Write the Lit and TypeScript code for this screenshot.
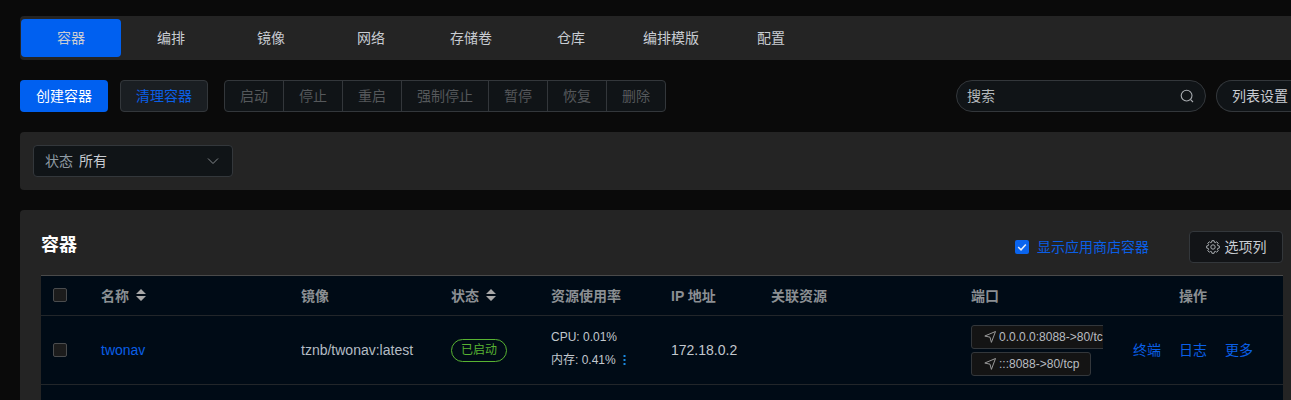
import {LitElement, html, css, svg} from 'lit';
import {customElement} from 'lit/decorators.js';

const tabs = ['容器', '编排', '镜像', '网络', '存储卷', '仓库', '编排模版', '配置'];
const actions = ['启动', '停止', '重启', '强制停止', '暂停', '恢复', '删除'];
const ports = ['0.0.0.0:8088->80/tcp', ':::8088->80/tcp'];
const ops = ['终端', '日志', '更多'];

const sortIcon = svg`<svg class="sort" width="10" height="12" viewBox="0 0 10 12"><path d="M5 0 L10 5 H0 Z M5 12 L0 7 H10 Z" fill="currentColor"/></svg>`;
const portIcon = svg`<svg width="14" height="14" viewBox="0 0 14 14" fill="none" stroke="#9a9a9a" stroke-width="1"><path d="M12.5 1.5 L1.8 6 L7 7.2 L8.4 12.4 Z"/></svg>`;

// gear outline, 8 teeth around the middle of a 14px box
function gearPath() {
  const pts: string[] = [];
  for (let i = 0; i < 8; i++) {
    const a = (i * Math.PI) / 4;
    for (const [r, d] of [[4.9, -0.3], [6.4, -0.17], [6.4, 0.17], [4.9, 0.3]]) {
      const x = 7 + r * Math.cos(a + d);
      const y = 7 + r * Math.sin(a + d);
      pts.push(`${x.toFixed(2)} ${y.toFixed(2)}`);
    }
  }
  return 'M' + pts.join(' L') + ' Z';
}

@customElement('app-root')
export class AppRoot extends LitElement {
  static styles = css`
    :host {
      display: block;
      height: 400px;
      overflow: hidden;
      background: #0a0a0a;
      font-family: "Liberation Sans", "Noto Sans CJK SC", sans-serif;
      font-size: 14px;
      color: #c8ccd2;
    }
    .page {
      width: 1284px;
      margin-left: 20px;
      padding-top: 16px;
    }

    /* tabs */
    .tabs {
      display: flex;
      height: 44px;
      box-sizing: border-box;
      padding: 3px 1px;
      background: #242424;
      border-radius: 4px;
    }
    .tab {
      width: 100px;
      display: flex;
      align-items: center;
      justify-content: center;
      box-sizing: border-box;
      padding-bottom: 2px;
      border-radius: 4px;
      color: #c8ccd2;
    }
    .tab.active {
      background: #0060f0;
    }

    /* toolbar */
    .toolbar {
      display: flex;
      align-items: center;
      margin-top: 20px;
      height: 32px;
    }
    .btn {
      height: 32px;
      box-sizing: border-box;
      padding: 0 15px 2px;
      border-radius: 4px;
      display: flex;
      align-items: center;
      border: 1px solid transparent;
    }
    .btn.primary {
      background: #0060f0;
      color: #fff;
      margin-right: 12px;
    }
    .btn.plain {
      background: #1a1e22;
      border-color: #33373b;
      color: #0a5fe6;
      margin-right: 16px;
    }
    .group {
      display: flex;
      height: 32px;
      box-sizing: border-box;
      border: 1px solid #33373b;
      border-radius: 4px;
      background: #101417;
    }
    .group span {
      padding: 0 15px 2px;
      display: flex;
      align-items: center;
      color: #55585b;
      border-right: 1px solid #33373b;
    }
    .group span:last-child {
      border-right: 0;
    }
    .search {
      margin-left: auto;
      width: 250px;
      height: 32px;
      box-sizing: border-box;
      border: 1px solid #33373b;
      border-radius: 16px;
      background: #101417;
      display: flex;
      align-items: center;
      justify-content: space-between;
      padding: 0 11px 0 10px;
      color: #b4b8bc;
    }
    .search span {
      padding-bottom: 2px;
    }
    .settings {
      margin-left: 10px;
      height: 32px;
      width: 88px;
      box-sizing: border-box;
      padding: 0 15px 2px;
      border: 1px solid #33373b;
      border-right: 0;
      border-radius: 16px 0 0 16px;
      background: #101417;
      display: flex;
      align-items: center;
      color: #c8ccd2;
    }

    /* filter */
    .filter {
      margin-top: 20px;
      height: 58px;
      box-sizing: border-box;
      padding: 13px;
      background: #242424;
      border-radius: 4px;
    }
    .select {
      width: 200px;
      height: 32px;
      box-sizing: border-box;
      border: 1px solid #33373b;
      border-radius: 4px;
      background: #101417;
      display: flex;
      align-items: center;
      padding: 0 13px 0 11px;
    }
    .select span {
      padding-bottom: 2px;
    }
    .select .key {
      color: #8f9aa3;
      margin-right: 6px;
    }
    .select .chev {
      margin-left: auto;
    }

    /* container card */
    .card {
      margin-top: 20px;
      padding: 21px 21px 0;
      background: #242424;
      border-radius: 4px;
      height: 300px;
      box-sizing: border-box;
    }
    .head {
      display: flex;
      align-items: center;
      height: 32px;
      margin-bottom: 12px;
    }
    .title {
      font-size: 18px;
      font-weight: bold;
      color: #fff;
      padding-bottom: 8px;
    }
    .check-app {
      margin-left: auto;
      display: flex;
      align-items: center;
      color: #0a5fe6;
      margin-right: 40px;
    }
    .check-app span.text {
      padding-bottom: 2px;
    }
    .check-on {
      width: 14px;
      height: 14px;
      background: #0a64ee;
      border-radius: 2px;
      margin-right: 8px;
      display: flex;
      align-items: center;
      justify-content: center;
    }
    .columns {
      width: 94px;
      height: 32px;
      box-sizing: border-box;
      border: 1px solid #33373b;
      border-radius: 4px;
      background: #121417;
      display: flex;
      align-items: center;
      justify-content: center;
      gap: 5px;
      color: #c8ccd2;
    }
    .columns span {
      padding-bottom: 2px;
    }

    /* table */
    .table {
      background: #000b16;
      border-top: 1px solid #4a4a4a;
      height: 200px;
    }
    .row {
      display: grid;
      grid-template-columns: 60px 200px 150px 100px 120px 100px 200px 132px 180px;
      align-items: center;
      box-sizing: border-box;
      border-bottom: 1px solid #22262a;
    }
    .row.header {
      height: 40px;
      font-weight: bold;
      color: #8b8f93;
    }
    .row.header > div {
      padding-bottom: 2px;
    }
    .row.body {
      height: 69px;
    }
    .box {
      width: 14px;
      height: 14px;
      box-sizing: border-box;
      margin-left: 12px;
      border: 1px solid #4a4c4e;
      border-radius: 2px;
      background: #1c1c1c;
    }
    .label {
      display: flex;
      align-items: center;
      gap: 7px;
    }
    .sort {
      color: #a8a8a8;
    }
    .center {
      text-align: center;
    }
    .name {
      color: #0a5fe6;
    }
    .image {
      color: #b4bcc4;
    }
    .status {
      display: block;
      width: 56px;
      height: 23px;
      line-height: 20px;
      box-sizing: border-box;
      border: 1px solid #58b332;
      border-radius: 12px;
      color: #58b332;
      font-size: 12px;
      text-align: center;
    }
    .usage {
      font-size: 12px;
      color: #c2c8ce;
      line-height: 23px;
      padding-bottom: 2px;
    }
    .usage .dots {
      vertical-align: -2px;
      margin-left: 7px;
    }
    .ip {
      color: #c2c8ce;
    }
    .ports {
      overflow: hidden;
      display: flex;
      flex-direction: column;
      gap: 3px;
    }
    .port {
      display: inline-flex;
      align-items: center;
      align-self: flex-start;
      gap: 2px;
      height: 24px;
      box-sizing: border-box;
      padding: 0 11px;
      border: 1px solid #33373b;
      border-radius: 3px;
      background: #141414;
      color: #b8bcc0;
      font-size: 12px;
      white-space: nowrap;
    }
    .ops {
      display: flex;
      justify-content: center;
      gap: 18px;
      color: #0a5fe6;
      padding-bottom: 2px;
    }
  `;

  render() {
    return html`
      <div class="page">
        <div class="tabs">
          ${tabs.map((t, i) => html`<div class="tab ${i === 0 ? 'active' : ''}">${t}</div>`)}
        </div>

        <div class="toolbar">
          <div class="btn primary">创建容器</div>
          <div class="btn plain">清理容器</div>
          <div class="group">${actions.map((a) => html`<span>${a}</span>`)}</div>
          <div class="search">
            <span>搜索</span>
            <svg width="14" height="14" viewBox="0 0 14 14" fill="none" stroke="#a8acb0" stroke-width="1.1">
              <circle cx="6.6" cy="6.6" r="5.4" />
              <path d="M10.6 10.6 L13 13" />
            </svg>
          </div>
          <div class="settings">列表设置</div>
        </div>

        <div class="filter">
          <div class="select">
            <span class="key">状态</span>
            <span>所有</span>
            <svg class="chev" width="12" height="12" viewBox="0 0 12 12" fill="none" stroke="#85898d" stroke-width="1">
              <path d="M1 3.5 L6 8.5 L11 3.5" />
            </svg>
          </div>
        </div>

        <div class="card">
          <div class="head">
            <div class="title">容器</div>
            <div class="check-app">
              <span class="check-on">
                <svg width="10" height="10" viewBox="0 0 10 10" fill="none" stroke="#e4ecf8" stroke-width="1.5">
                  <path d="M1.2 5 L4 7.8 L8.8 2.4" />
                </svg>
              </span>
              <span class="text">显示应用商店容器</span>
            </div>
            <div class="columns">
              <svg width="14" height="14" viewBox="0 0 14 14" fill="none" stroke="#a8acb0" stroke-width="1">
                <path d=${gearPath()} stroke-linejoin="round" />
                <circle cx="7" cy="7" r="2.2" />
              </svg>
              <span>选项列</span>
            </div>
          </div>

          <div class="table">
            <div class="row header">
              <div><div class="box"></div></div>
              <div class="label">名称 ${sortIcon}</div>
              <div>镜像</div>
              <div class="label">状态 ${sortIcon}</div>
              <div>资源使用率</div>
              <div>IP 地址</div>
              <div>关联资源</div>
              <div>端口</div>
              <div class="center">操作</div>
            </div>
            <div class="row body">
              <div><div class="box"></div></div>
              <div class="name">twonav</div>
              <div class="image">tznb/twonav:latest</div>
              <div><span class="status">已启动</span></div>
              <div class="usage">
                <div>CPU: 0.01%</div>
                <div>
                  内存: 0.41%<svg class="dots" width="3" height="11" viewBox="0 0 3 11" fill="#1a8ae0">
                    <rect x="0.5" y="0" width="2" height="2" />
                    <rect x="0.5" y="4" width="2" height="2" />
                    <rect x="0.5" y="8" width="2" height="2" />
                  </svg>
                </div>
              </div>
              <div class="ip">172.18.0.2</div>
              <div></div>
              <div class="ports">
                ${ports.map((p) => html`<span class="port">${portIcon}${p}</span>`)}
              </div>
              <div class="ops">${ops.map((o) => html`<span>${o}</span>`)}</div>
            </div>
          </div>
        </div>
      </div>
    `;
  }
}
